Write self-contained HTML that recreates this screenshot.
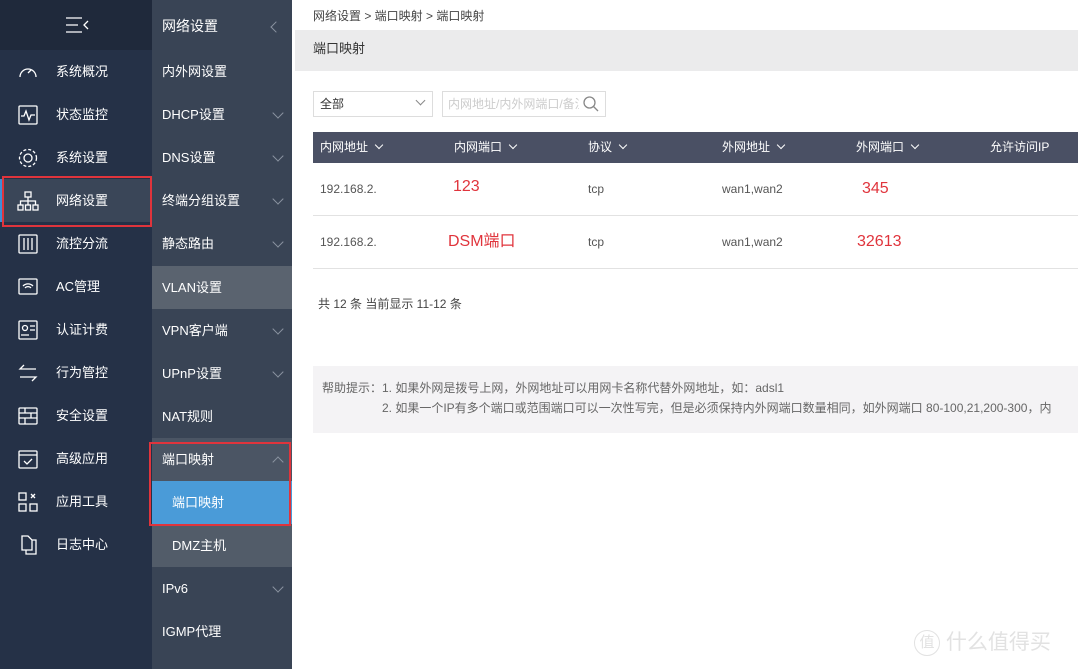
<!DOCTYPE html>
<html><head><meta charset="utf-8"><style>
*{margin:0;padding:0;box-sizing:border-box}
body{width:1078px;height:669px;overflow:hidden;background:#fff;font-family:"Liberation Sans","Noto Sans CJK SC",sans-serif;position:relative}
#s1{position:absolute;left:0;top:0;width:152px;height:669px;background:#253147}
#s1 .top{height:50px;background:#1f293b;position:relative}
.it{position:absolute;left:0;width:152px;height:43px;color:#fff;font-size:13px;line-height:43px;padding-left:56px}
.it svg{position:absolute;left:17px;top:11px}
#s2{position:absolute;left:152px;top:0;width:140px;height:669px;background:#394455}
.j{position:absolute;left:0;width:140px;height:43px;color:#fff;font-size:13px;line-height:43px;padding-left:10px}
.j .ar{position:absolute;right:10px;top:16px;width:8px;height:8px;border-right:1px solid #8a93a0;border-bottom:1px solid #8a93a0;transform:rotate(45deg)}
.red{position:absolute;border:2px solid #e0343c}
.main{position:absolute;left:292px;top:0;right:0;bottom:0}
.th{position:absolute;top:132px;left:21px;right:0;height:31px;background:#4a5064;color:#fff;font-size:12px;line-height:31px}
.th span,.row span{position:absolute}
.th i{display:inline-block;width:6px;height:6px;border-right:1px solid #fff;border-bottom:1px solid #fff;transform:rotate(45deg);margin-left:8px;position:relative;top:-3px}
.row{position:absolute;left:21px;right:0;height:53px;border-bottom:1px solid #e2e2e2;font-size:12px;color:#555;line-height:53px}
.r{color:#e0343c;font-size:16px}
</style></head><body>
<div id="s1"><div class="top"><svg width="30" height="20" style="position:absolute;left:64px;top:16px" fill="none" stroke="#fff" stroke-width="1.3"><path d="M2 2h16M2 9h12M2 16h16M24 5l-4 4 4 4"/></svg></div>
<div class="it" style="top:50px"><svg width="22" height="22" fill="none" stroke="#fff" stroke-width="1.3"><path d="M3 16a8 8 0 1 1 16 0"/><path d="M11 12l3-3"/></svg>系统概况</div>
<div class="it" style="top:93px"><svg width="22" height="22" fill="none" stroke="#fff" stroke-width="1.3"><rect x="2" y="2" width="18" height="18" rx="1"/><path d="M4 12h3l2-5 3 9 2-5h4"/></svg>状态监控</div>
<div class="it" style="top:136px"><svg width="22" height="22" fill="none" stroke="#fff" stroke-width="1.3"><circle cx="11" cy="11" r="4"/><circle cx="11" cy="11" r="8.5" stroke-dasharray="3 2"/></svg>系统设置</div>
<div class="it" style="top:179px;background:#3a4658;border-left:3px solid #3d8fd6;padding-left:53px"><svg width="22" height="22" fill="none" stroke="#fff" stroke-width="1.3" style="left:14px"><rect x="8" y="2" width="6" height="5"/><rect x="1" y="15" width="5" height="5"/><rect x="8.5" y="15" width="5" height="5"/><rect x="16" y="15" width="5" height="5"/><path d="M11 7v4M3.5 15v-4h15v4M11 11v4"/></svg>网络设置</div>
<div class="it" style="top:222px"><svg width="22" height="22" fill="none" stroke="#fff" stroke-width="1.3"><rect x="2" y="2" width="18" height="18" rx="1"/><path d="M7 5v12M11 5v12M15 5v12"/></svg>流控分流</div>
<div class="it" style="top:265px"><svg width="22" height="22" fill="none" stroke="#fff" stroke-width="1.3"><rect x="2" y="3" width="18" height="15" rx="1"/><path d="M6 10a7 7 0 0 1 10 0M8 12a4 4 0 0 1 6 0"/></svg>AC管理</div>
<div class="it" style="top:308px"><svg width="22" height="22" fill="none" stroke="#fff" stroke-width="1.3"><rect x="2" y="2" width="18" height="18" rx="1"/><circle cx="8" cy="9" r="2.5"/><path d="M4 16h8M13 7h5M13 11h5"/></svg>认证计费</div>
<div class="it" style="top:351px"><svg width="22" height="22" fill="none" stroke="#fff" stroke-width="1.3"><path d="M19 7H3l4-4M3 15h16l-4 4"/></svg>行为管控</div>
<div class="it" style="top:394px"><svg width="22" height="22" fill="none" stroke="#fff" stroke-width="1.3"><rect x="2" y="3" width="18" height="16" rx="1"/><path d="M2 8h18M2 13h18M8 3v5M14 8v5M8 13v6"/></svg>安全设置</div>
<div class="it" style="top:437px"><svg width="22" height="22" fill="none" stroke="#fff" stroke-width="1.3"><rect x="2" y="3" width="18" height="17" rx="1"/><path d="M2 7h18M7 13l3 3 5-5"/></svg>高级应用</div>
<div class="it" style="top:480px"><svg width="22" height="22" fill="none" stroke="#fff" stroke-width="1.3"><rect x="2" y="2" width="7" height="7"/><rect x="2" y="13" width="7" height="7"/><rect x="13" y="13" width="7" height="7"/><path d="M14 3l4 4M18 3l-4 4"/></svg>应用工具</div>
<div class="it" style="top:523px"><svg width="22" height="22" fill="none" stroke="#fff" stroke-width="1.3"><path d="M5 2h6l4 4v10H5zM15 6h4v14H9v-4"/></svg>日志中心</div>
</div>
<div class="red" style="left:2px;top:176px;width:150px;height:51px"></div>
<div id="s2">
<div class="j" style="top:5px;font-size:14px">网络设置<i style="position:absolute;right:12px;top:18px;width:8px;height:8px;border-left:1px solid #8a93a0;border-bottom:1px solid #8a93a0;transform:rotate(45deg)"></i></div>
<div class="j" style="top:50px">内外网设置</div>
<div class="j" style="top:93px">DHCP设置<i class="ar"></i></div>
<div class="j" style="top:136px">DNS设置<i class="ar"></i></div>
<div class="j" style="top:179px">终端分组设置<i class="ar"></i></div>
<div class="j" style="top:222px">静态路由<i class="ar"></i></div>
<div class="j" style="top:266px;background:#5a636f">VLAN设置</div>
<div class="j" style="top:309px">VPN客户端<i class="ar"></i></div>
<div class="j" style="top:352px">UPnP设置<i class="ar"></i></div>
<div class="j" style="top:395px">NAT规则</div>
<div class="j" style="top:438px;background:#4b5564">端口映射<i class="ar" style="transform:rotate(225deg);top:20px"></i></div>
<div class="j" style="top:481px;background:#4a9bd8;padding-left:20px">端口映射</div>
<div class="j" style="top:524px;background:#525c69;padding-left:20px">DMZ主机</div>
<div class="j" style="top:567px">IPv6<i class="ar"></i></div>
<div class="j" style="top:610px">IGMP代理</div>
</div>
<div class="red" style="left:149px;top:442px;width:142px;height:84px"></div>
<div class="main">
<div style="position:absolute;left:21px;top:7px;font-size:12px;color:#444">网络设置 &gt; 端口映射 &gt; 端口映射</div>
<div style="position:absolute;left:3px;top:30px;right:0;height:41px;background:#ebebec;padding-left:18px;line-height:38px;font-size:13px;color:#333">端口映射</div>
<div style="position:absolute;left:21px;top:91px;width:120px;height:26px;border:1px solid #ddd;font-size:12px;line-height:24px;padding-left:6px;color:#333">全部<span style="position:absolute;right:8px;top:5px;width:7px;height:7px;border-right:1px solid #888;border-bottom:1px solid #888;transform:rotate(45deg)"></span></div>
<div style="position:absolute;left:150px;top:91px;width:164px;height:26px;border:1px solid #ddd;font-size:12px;line-height:24px;padding-left:5px;color:#ccc;overflow:hidden;white-space:nowrap">内网地址/内外网端口/备注<span style="position:absolute;right:0;top:0;width:26px;height:24px;background:#fff"><svg width="18" height="18" style="position:absolute;left:3px;top:3px" fill="none" stroke="#888" stroke-width="1.3"><circle cx="7.5" cy="7.5" r="5.5"/><path d="M11.5 11.5l4.5 4.5"/></svg></span></div>
<div class="th"><span style="left:7px">内网地址<i></i></span><span style="left:141px">内网端口<i></i></span><span style="left:275px">协议<i></i></span><span style="left:409px">外网地址<i></i></span><span style="left:543px">外网端口<i></i></span><span style="left:677px">允许访问IP</span></div>
<div class="row" style="top:163px"><span style="left:7px">192.168.2.</span><span class="r" style="left:140px;top:-3px">123</span><span style="left:275px">tcp</span><span style="left:409px">wan1,wan2</span><span class="r" style="left:549px;top:-1px">345</span></div>
<div class="row" style="top:216px"><span style="left:7px">192.168.2.</span><span class="r" style="left:135px;top:-1px">DSM端口</span><span style="left:275px">tcp</span><span style="left:409px">wan1,wan2</span><span class="r" style="left:544px;top:-1px">32613</span></div>
<div style="position:absolute;left:26px;top:295px;font-size:12px;color:#444">共 12 条 当前显示 11-12 条</div>
<div style="position:absolute;left:21px;top:366px;right:0;height:67px;background:#f4f3f5;font-size:12px;color:#666;line-height:20px;padding:12px 0 0 9px;white-space:nowrap;overflow:hidden">帮助提示：1. 如果外网是拨号上网，外网地址可以用网卡名称代替外网地址，如：adsl1<br><span style="padding-left:60px">2. 如果一个IP有多个端口或范围端口可以一次性写完，但是必须保持内外网端口数量相同，如外网端口 80-100,21,200-300，内</span></div>
<div style="position:absolute;left:622px;top:626px;font-size:21px;color:#e2e2e2"><span style="display:inline-block;width:26px;height:26px;border:1px solid #e2e2e2;border-radius:50%;font-size:15px;text-align:center;line-height:24px;vertical-align:2px">值</span> 什么值得买</div>
</div>
</body></html>
